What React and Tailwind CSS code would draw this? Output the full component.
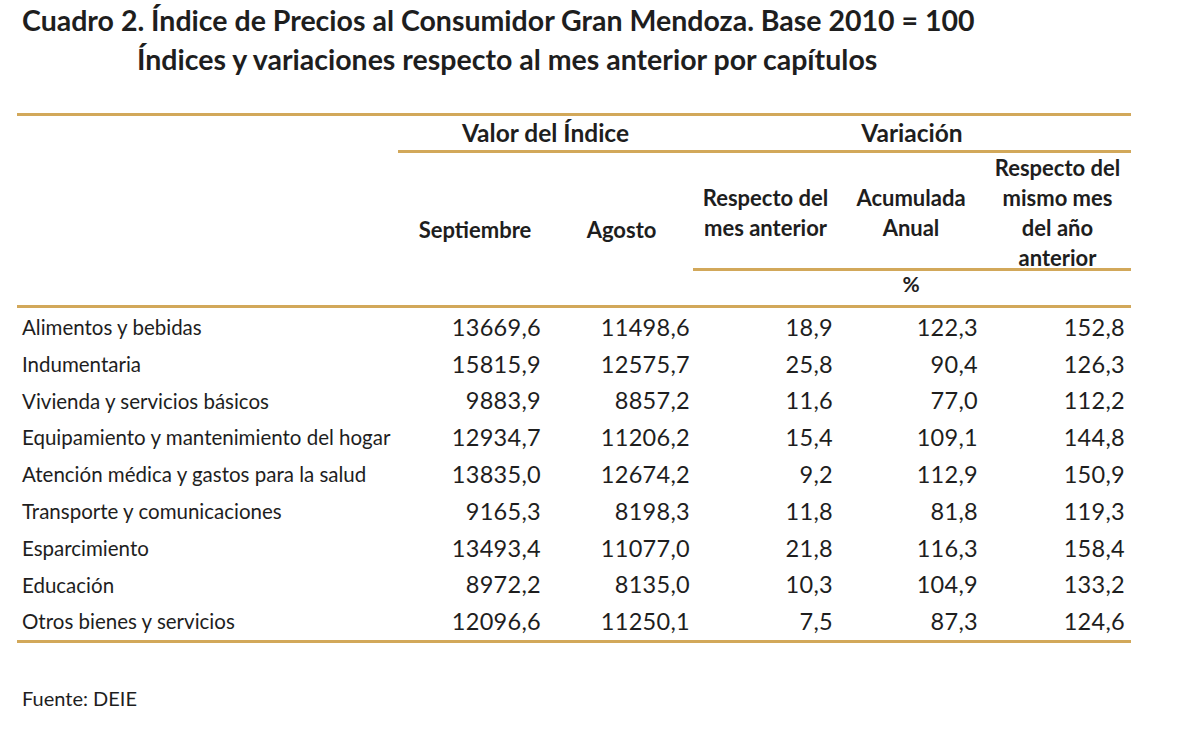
const rows = [
  ["Alimentos y bebidas", "13669,6", "11498,6", "18,9", "122,3", "152,8"],
  ["Indumentaria", "15815,9", "12575,7", "25,8", "90,4", "126,3"],
  ["Vivienda y servicios básicos", "9883,9", "8857,2", "11,6", "77,0", "112,2"],
  ["Equipamiento y mantenimiento del hogar", "12934,7", "11206,2", "15,4", "109,1", "144,8"],
  ["Atención médica y gastos para la salud", "13835,0", "12674,2", "9,2", "112,9", "150,9"],
  ["Transporte y comunicaciones", "9165,3", "8198,3", "11,8", "81,8", "119,3"],
  ["Esparcimiento", "13493,4", "11077,0", "21,8", "116,3", "158,4"],
  ["Educación", "8972,2", "8135,0", "10,3", "104,9", "133,2"],
  ["Otros bienes y servicios", "12096,6", "11250,1", "7,5", "87,3", "124,6"],
];

const cols = "grid grid-cols-[381px_148px_147px_145px_146px_147px]";

export default function App() {
  return (
    <div className="w-[1200px] h-[731px] bg-white text-[#1e1e1e] font-['Lato','Liberation_Sans',sans-serif] overflow-hidden">
      <div className="pt-[2px] pl-[22px] text-[28.5px] font-bold leading-[36px] whitespace-nowrap">
        Cuadro 2. Índice de Precios al Consumidor Gran Mendoza. Base 2010 = 100
      </div>
      <div className="pl-[137px] text-[28.5px] font-bold leading-[36px] mt-[3px] whitespace-nowrap">
        Índices y variaciones respecto al mes anterior por capítulos
      </div>

      <div className="ml-[17px] w-[1114px] mt-[36px]">
        <div className="h-[3px] bg-[#d2a85a]" />

        {/* group headers */}
        <div className={cols + " text-[24.5px] font-bold"}>
          <div />
          <div className="col-span-2 text-center leading-[34px] h-[34px]">Valor del Índice</div>
          <div className="col-span-3 text-center leading-[34px] h-[34px]">Variación</div>
        </div>
        <div className={cols}>
          <div />
          <div className="col-span-5 h-[3px] bg-[#d2a85a]" />
        </div>

        {/* column headers */}
        <div className={cols + " text-[22px] font-bold leading-[30px] h-[115px] text-center"}>
          <div />
          <div className="flex items-center justify-center pt-[30px] pl-[6px]">Septiembre</div>
          <div className="flex items-center justify-center pt-[30px] pl-[4px]">Agosto</div>
          <div className="flex items-center justify-center pb-[4px]">
            <span>Respecto del<br />mes anterior</span>
          </div>
          <div className="flex items-center justify-center pb-[4px]">
            <span>Acumulada<br />Anual</span>
          </div>
          <div className="flex items-center justify-center pb-[4px]">
            <span className="whitespace-nowrap">Respecto del<br />mismo mes<br />del año<br />anterior</span>
          </div>
        </div>
        <div className={cols}>
          <div className="col-span-3" />
          <div className="col-span-3 h-[3px] bg-[#d2a85a]" />
        </div>
        <div className={cols + " text-[21px] font-bold h-[34px] leading-[26px]"}>
          <div className="col-span-4" />
          <div className="text-center">%</div>
        </div>
        <div className="h-[3px] bg-[#d2a85a]" />

        {/* body */}
        <div className="pt-[1px]">
          {rows.map((r) => (
            <div key={r[0]} className={cols + " h-[36.8px] items-center text-[20.5px]"}>
              <div className="pl-[5px] whitespace-nowrap">{r[0]}</div>
              <div className="text-right pr-[5px] text-[23.5px] tracking-[0.3px]">{r[1]}</div>
              <div className="text-right pr-[3px] text-[23.5px] tracking-[0.3px]">{r[2]}</div>
              <div className="text-right pr-[5px] text-[23.5px] tracking-[0.3px]">{r[3]}</div>
              <div className="text-right pr-[6px] text-[23.5px] tracking-[0.3px]">{r[4]}</div>
              <div className="text-right pr-[6px] text-[23.5px] tracking-[0.3px]">{r[5]}</div>
            </div>
          ))}
        </div>
        <div className="h-[3px] bg-[#d2a85a]" />
      </div>

      <div className="pl-[22px] mt-[41px] text-[20px] leading-[28px]">Fuente: DEIE</div>
    </div>
  );
}
